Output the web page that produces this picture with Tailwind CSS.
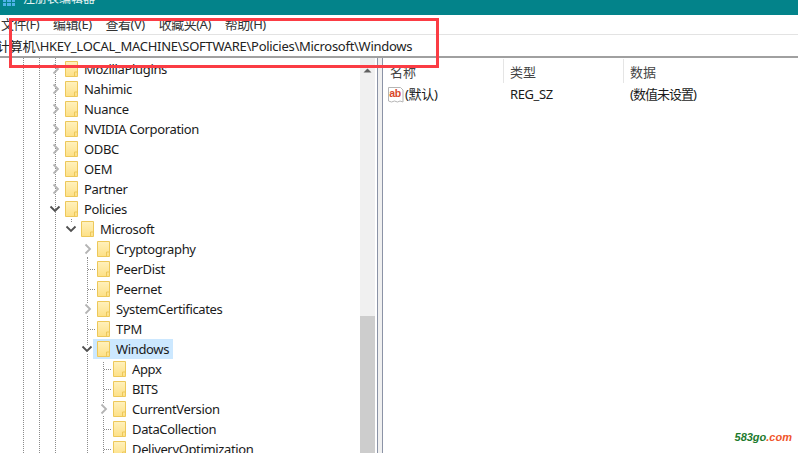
<!DOCTYPE html>
<html>
<head>
<meta charset="utf-8">
<script src="https://cdn.jsdelivr.net/npm/@tailwindcss/browser@4"></script>
<title>注册表编辑器</title>
</head>
<body class="relative w-[798px] h-[453px] overflow-hidden bg-white text-[13px] text-[#1a1a1a] font-['Noto_Sans','Noto_Sans_CJK_SC',sans-serif]">
  <svg width="0" height="0" class="absolute">
    <defs>
      <linearGradient id="fill" x1="0" y1="0" x2="0" y2="1">
        <stop offset="0" stop-color="#fff1bd"/>
        <stop offset="1" stop-color="#fde086"/>
      </linearGradient>
      <symbol id="folder" viewBox="0 0 13 16">
        <path d="M.5.5h12v15H.5z" fill="url(#fill)" stroke="#edc85a"/>
        <path d="M9.500 15v-4h3" fill="none" stroke="#edc85a"/>
      </symbol>
      <symbol id="open" viewBox="0 0 8 12">
        <path d="M1.500 1.500 6 6l-4.500 4.500" fill="none" stroke="#b4b4b4" stroke-width="1.800"/>
      </symbol>
      <symbol id="close" viewBox="0 0 12 8">
        <path d="M1.500 1.500 6 6l4.500-4.500" fill="none" stroke="#505050" stroke-width="1.800"/>
      </symbol>
    </defs>
  </svg>

  <header class="h-[15px] bg-[#03838a] flex items-start overflow-hidden text-[#e4f4f4]">
    <div class="ml-[3px] -mt-[1px] grid grid-cols-3 gap-px w-[12px]">
      <i class="h-[3px] bg-[#4fb2e8]"></i><i class="h-[3px] bg-[#4fb2e8]"></i><i class="h-[3px] bg-[#4fb2e8]"></i>
      <i class="h-[3px] bg-[#4fb2e8]"></i><i class="h-[3px] bg-[#4fb2e8]"></i><i class="h-[3px] bg-[#4fb2e8]"></i>
    </div>
    <span class="ml-[8px] -mt-[7px] text-[12px] leading-none">注册表编辑器</span>
  </header>

  <nav class="h-[20px] flex items-center gap-[14px] pl-[1px] bg-white text-[#333] tracking-[-0.5px] border-b border-[#e3e3e3]">
    <span>文件(F)</span><span>编辑(E)</span><span>查看(V)</span><span>收藏夹(A)</span><span>帮助(H)</span>
  </nav>

  <div class="h-[23px] pt-[2px] flex items-center border-b-2 border-[#a0a0a0] whitespace-nowrap">
    <span class="-ml-[3px] text-[#222] tracking-[-0.28px]">计算机\HKEY_LOCAL_MACHINE\SOFTWARE\Policies\Microsoft\Windows</span>
  </div>

  <main class="flex h-[395px]">
    <section class="relative w-[377px] overflow-hidden">
      <div class="absolute left-[23px] top-0 h-full border-l border-dotted border-[#8c8c8c]"></div>
      <div class="absolute left-[39px] top-0 h-full border-l border-dotted border-[#8c8c8c]"></div>
      <div class="absolute left-[55px] top-0 h-full border-l border-dotted border-[#8c8c8c]"></div>
      <div class="absolute left-[71px] top-[161px] h-[3px] border-l border-dotted border-[#8c8c8c]"></div>
      <div class="absolute left-[87px] top-[199px] bottom-0 border-l border-dotted border-[#8c8c8c]"></div>
      <div class="absolute left-[103px] top-[304px] bottom-0 border-l border-dotted border-[#8c8c8c]"></div>

      <ul class="relative mt-[1px] leading-[20px] tracking-[-0.35px]">
        <li class="h-[20px] flex items-center pl-[52px]"><svg class="w-[8px] h-[12px] mr-[5px]"><use href="#open"/></svg><svg class="w-[13px] h-[16px] mr-[6px]"><use href="#folder"/></svg>MozillaPlugins</li>
        <li class="h-[20px] flex items-center pl-[52px]"><svg class="w-[8px] h-[12px] mr-[5px]"><use href="#open"/></svg><svg class="w-[13px] h-[16px] mr-[6px]"><use href="#folder"/></svg>Nahimic</li>
        <li class="h-[20px] flex items-center pl-[52px]"><svg class="w-[8px] h-[12px] mr-[5px]"><use href="#open"/></svg><svg class="w-[13px] h-[16px] mr-[6px]"><use href="#folder"/></svg>Nuance</li>
        <li class="h-[20px] flex items-center pl-[52px]"><svg class="w-[8px] h-[12px] mr-[5px]"><use href="#open"/></svg><svg class="w-[13px] h-[16px] mr-[6px]"><use href="#folder"/></svg>NVIDIA Corporation</li>
        <li class="h-[20px] flex items-center pl-[52px]"><svg class="w-[8px] h-[12px] mr-[5px]"><use href="#open"/></svg><svg class="w-[13px] h-[16px] mr-[6px]"><use href="#folder"/></svg>ODBC</li>
        <li class="h-[20px] flex items-center pl-[52px]"><svg class="w-[8px] h-[12px] mr-[5px]"><use href="#open"/></svg><svg class="w-[13px] h-[16px] mr-[6px]"><use href="#folder"/></svg>OEM</li>
        <li class="h-[20px] flex items-center pl-[52px]"><svg class="w-[8px] h-[12px] mr-[5px]"><use href="#open"/></svg><svg class="w-[13px] h-[16px] mr-[6px]"><use href="#folder"/></svg>Partner</li>
        <li class="h-[20px] flex items-center pl-[49px]"><svg class="w-[12px] h-[8px] mr-[4px]"><use href="#close"/></svg><svg class="w-[13px] h-[16px] mr-[6px]"><use href="#folder"/></svg>Policies</li>
        <li class="h-[20px] flex items-center pl-[65px]"><svg class="w-[12px] h-[8px] mr-[4px]"><use href="#close"/></svg><svg class="w-[13px] h-[16px] mr-[6px]"><use href="#folder"/></svg>Microsoft</li>
        <li class="h-[20px] flex items-center pl-[84px]"><svg class="w-[8px] h-[12px] mr-[5px] bg-white"><use href="#open"/></svg><svg class="w-[13px] h-[16px] mr-[6px]"><use href="#folder"/></svg>Cryptography</li>
        <li class="h-[20px] flex items-center pl-[88px]"><span class="w-[7px] mr-[2px] border-t border-dotted border-[#8c8c8c]"></span><svg class="w-[13px] h-[16px] mr-[6px]"><use href="#folder"/></svg>PeerDist</li>
        <li class="h-[20px] flex items-center pl-[88px]"><span class="w-[7px] mr-[2px] border-t border-dotted border-[#8c8c8c]"></span><svg class="w-[13px] h-[16px] mr-[6px]"><use href="#folder"/></svg>Peernet</li>
        <li class="h-[20px] flex items-center pl-[84px]"><svg class="w-[8px] h-[12px] mr-[5px] bg-white"><use href="#open"/></svg><svg class="w-[13px] h-[16px] mr-[6px]"><use href="#folder"/></svg>SystemCertificates</li>
        <li class="h-[20px] flex items-center pl-[88px]"><span class="w-[7px] mr-[2px] border-t border-dotted border-[#8c8c8c]"></span><svg class="w-[13px] h-[16px] mr-[6px]"><use href="#folder"/></svg>TPM</li>
        <li class="h-[20px] flex items-center pl-[81px]"><svg class="w-[12px] h-[8px] bg-white"><use href="#close"/></svg><span class="flex items-center h-[20px] w-[80px] pl-[4px] bg-[#cce8ff]"><svg class="w-[13px] h-[16px] mr-[6px]"><use href="#folder"/></svg>Windows</span></li>
        <li class="h-[20px] flex items-center pl-[104px]"><span class="w-[7px] mr-[2px] border-t border-dotted border-[#8c8c8c]"></span><svg class="w-[13px] h-[16px] mr-[6px]"><use href="#folder"/></svg>Appx</li>
        <li class="h-[20px] flex items-center pl-[104px]"><span class="w-[7px] mr-[2px] border-t border-dotted border-[#8c8c8c]"></span><svg class="w-[13px] h-[16px] mr-[6px]"><use href="#folder"/></svg>BITS</li>
        <li class="h-[20px] flex items-center pl-[100px]"><svg class="w-[8px] h-[12px] mr-[5px] bg-white"><use href="#open"/></svg><svg class="w-[13px] h-[16px] mr-[6px]"><use href="#folder"/></svg>CurrentVersion</li>
        <li class="h-[20px] flex items-center pl-[104px]"><span class="w-[7px] mr-[2px] border-t border-dotted border-[#8c8c8c]"></span><svg class="w-[13px] h-[16px] mr-[6px]"><use href="#folder"/></svg>DataCollection</li>
        <li class="h-[20px] flex items-center pl-[104px]"><span class="w-[7px] mr-[2px] border-t border-dotted border-[#8c8c8c]"></span><svg class="w-[13px] h-[16px] mr-[6px]"><use href="#folder"/></svg>DeliveryOptimization</li>
      </ul>

      <div class="absolute right-[2px] top-0 bottom-0 w-[15px] bg-[#f0f0f0]">
        <svg class="absolute left-[3px] top-[10px] w-[9px] h-[5px]" viewBox="0 0 9 5"><path d="M4.500.5 8.500 4.500H.5z" fill="#606060"/></svg>
        <div class="absolute left-0 right-0 top-[258px] bottom-0 bg-[#cdcdcd]"></div>
      </div>
    </section>

    <div class="w-[6px] bg-[#f0f0f0] border-x border-[#8b93a6]"></div>

    <section class="flex-1 pl-[1px]">
      <div class="h-[26px] flex items-center text-[#444]">
        <span class="w-[120px] h-[24px] leading-[26px] pl-[6px] border-r border-[#e5e5e5]">名称</span>
        <span class="w-[120px] h-[24px] leading-[26px] pl-[6px] border-r border-[#e5e5e5]">类型</span>
        <span class="h-[24px] leading-[26px] pl-[6px]">数据</span>
      </div>
      <div class="h-[22px] flex items-center">
        <span class="w-[120px] flex items-center pl-[4px] tracking-[-0.3px]">
          <svg class="w-[16px] h-[16px] mr-[1px]" viewBox="0 0 16 16">
            <path d="M.5.5h12l2.500 2.500v12l-3-1-2.500 1-3-1-3 1-3-1z" fill="#fff" stroke="#b5b5b5"/>
            <text x="7" y="10" text-anchor="middle" font-size="10.500" font-weight="700" fill="#d9482b" font-family="Liberation Sans">ab</text>
          </svg>
          (默认)
        </span>
        <span class="w-[120px] pl-[6px] tracking-[-0.4px]">REG_SZ</span>
        <span class="pl-[6px] tracking-[-1px]">(数值未设置)</span>
      </div>
    </section>
  </main>

  <div class="absolute left-[9px] top-[18px] w-[430px] h-[50px] border-[3px] border-[#fb3c44]"></div>
  <div class="absolute right-[6px] bottom-[10px] text-[11px] italic font-bold text-[#1c7a2c] leading-none font-['Liberation_Sans',sans-serif]">583go<span class="text-[#f0552b]">.com</span></div>
</body>
</html>
